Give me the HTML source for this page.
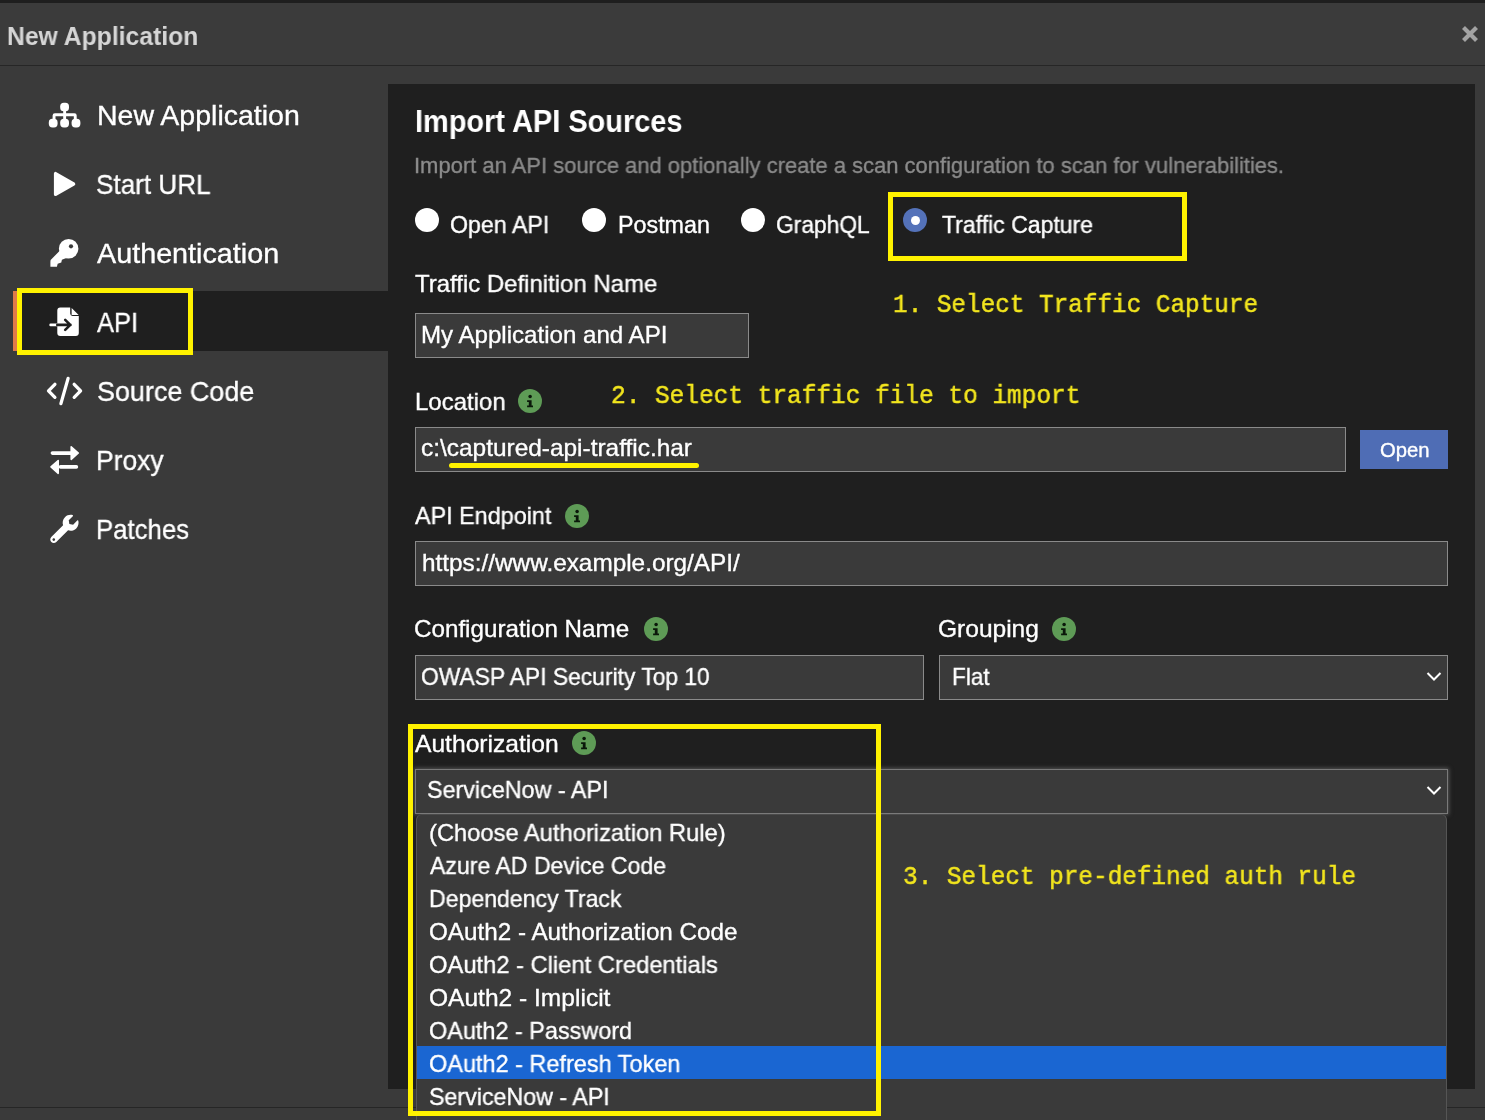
<!DOCTYPE html>
<html><head><meta charset="utf-8">
<style>
*{margin:0;padding:0;box-sizing:border-box}
html,body{width:1485px;height:1120px;overflow:hidden;background:#3a3a3a;font-family:"Liberation Sans",sans-serif;color:#fff}
.a{position:absolute;white-space:nowrap}
.t{position:absolute;white-space:nowrap;line-height:1;transform-origin:0 0;will-change:transform}
#topstrip{left:0;top:0;width:1485px;height:3px;background:#1e1e1e}
#hdr{left:0;top:3px;width:1485px;height:62px;background:#3b3b3b}
#hsep{left:0;top:65px;width:1485px;height:1px;background:#262626}
#panel{left:388px;top:84px;width:1087px;height:1005px;background:#1f1f1f}
#bsep{left:0;top:1106.5px;width:1485px;height:1.2px;background:#262626}
.side{font-size:28.5px;color:#fff}
.lbl{font-size:24px;color:#fff}
.inp{position:absolute;background:#3a3a3a;border:1px solid #8a8a8a}
.mono{font-family:"Liberation Mono",monospace;font-size:24.3px;color:#f2e51e}
.ybox{position:absolute;border:5px solid #fff200}
.radio{position:absolute;width:24px;height:24px;border-radius:50%;background:#fff}
.info{position:absolute;width:24px;height:24px}
.item{font-size:23.5px;color:#fff}
</style></head><body>
<div class="a" id="topstrip"></div>
<div class="a" id="hdr"></div>
<div class="a" id="hsep"></div>
<div class="a" id="bsep"></div>
<!-- close X -->
<svg class="a" style="left:1460px;top:23px" width="20" height="22" viewBox="0 0 20 22"><path d="M3.5 4.5 L16.5 17.5 M16.5 4.5 L3.5 17.5" stroke="#a3a3a3" stroke-width="4.2" stroke-linecap="butt"/></svg>

<!-- sidebar -->
<div class="a" style="left:13px;top:291px;width:375px;height:60px;background:#1f1f1f"></div>
<div class="a" style="left:13px;top:291px;width:4px;height:60px;background:#e07a48"></div>


<!-- icons -->
<svg class="a" style="left:40px;top:95px" width="50" height="40" viewBox="40 95 50 40">
 <g fill="#fff">
  <rect x="60.2" y="102.7" width="8.8" height="8.6" rx="3.6"/>
  <rect x="63.2" y="110" width="2.9" height="6"/>
  <path d="M52.6 119 V115.6 Q52.6 113.3 54.9 113.3 H74.4 Q76.7 113.3 76.7 115.6 V119 H73.8 V116.2 H55.5 V119 Z"/>
  <rect x="63.2" y="115" width="2.9" height="4"/>
  <rect x="48.8" y="118.8" width="8.8" height="8.6" rx="3.6"/>
  <rect x="60.2" y="118.8" width="8.8" height="8.6" rx="3.6"/>
  <rect x="71.6" y="118.8" width="8.8" height="8.6" rx="3.6"/>
 </g>
</svg>
<svg class="a" style="left:40px;top:165px" width="50" height="40" viewBox="40 165 50 40">
 <path d="M55.6 173.6 V194.4 L73.6 184 Z" fill="#fff" stroke="#fff" stroke-width="3.4" stroke-linejoin="round"/>
</svg>
<svg class="a" style="left:40px;top:230px" width="50" height="45" viewBox="40 230 50 45">
 <g fill="#fff"><circle cx="68.65" cy="248.75" r="9.75"/>
 <path d="M61 249.5 L50.65 260 Q50.4 261 50.4 262 V266.8 H56.9 L57.7 263.8 L61.3 262.4 L61.9 259.7 L65.7 258.2 L72 257.7 L66 252 Z"/></g>
 <circle cx="71" cy="246.3" r="2.1" fill="#3a3a3a"/>
</svg>
<svg class="a" style="left:40px;top:300px" width="50" height="45" viewBox="40 300 50 45">
 <path fill="#fff" d="M60 307.6 H70.2 V313.6 Q70.2 316 72.6 316 H78.8 V333 Q78.8 336 75.8 336 H60.3 Q57.3 336 57.3 333 V310.6 Q57.3 307.6 60.3 307.6 Z"/>
 <path fill="#fff" d="M71.6 308 L78.6 315 H71.6 Z"/>
 <path d="M50.6 324.9 H57.3" stroke="#fff" stroke-width="2.6" stroke-linecap="round"/>
 <path d="M57.3 324.9 H70.5 M65.2 319.9 L70.3 324.9 L65.2 329.9" stroke="#1f1f1f" stroke-width="2.6" fill="none" stroke-linecap="round" stroke-linejoin="round"/>
</svg>
<svg class="a" style="left:40px;top:370px" width="50" height="45" viewBox="40 370 50 45">
 <path d="M54.9 384.3 L48.5 390.8 L54.9 397.3 M74.2 384.3 L80.6 390.8 L74.2 397.3 M68.1 378.4 L60.9 403.6" stroke="#fff" stroke-width="3.3" fill="none" stroke-linecap="round" stroke-linejoin="round"/>
</svg>
<svg class="a" style="left:40px;top:440px" width="50" height="45" viewBox="40 440 50 45">
 <path d="M52.4 453.1 H71.5 M60.5 466.9 H76.4" stroke="#fff" stroke-width="3.6" stroke-linecap="round"/>
 <path d="M71.2 446.8 L78.3 453 L71.2 459.3 Z M58.2 460.6 L51 466.9 L58.2 473.3 Z" fill="#fff" stroke="#fff" stroke-width="1.6" stroke-linejoin="round"/>
</svg>
<svg class="a" style="left:40px;top:507px" width="50" height="45" viewBox="40 507 50 45">
 <g transform="translate(50.25 514.8) scale(0.0553)"><path fill="#fff" d="M507.73 109.1c-2.24-9.030-13.54-12.09-20.12-5.51l-74.36 74.36-67.88-11.31-11.31-67.88 74.36-74.36c6.62-6.62 3.43-17.9-5.66-20.16-47.38-11.74-99.55.91-136.58 37.93-39.64 39.64-50.55 97.1-34.05 147.2L18.74 402.76c-24.99 24.99-24.99 65.51 0 90.5 24.99 24.99 65.51 24.99 90.5 0l213.21-213.21c50.12 16.71 107.47 5.68 147.37-34.22 37.07-37.07 49.7-89.32 37.91-136.73zM64 472c-13.25 0-24-10.75-24-24 0-13.26 10.75-24 24-24s24 10.74 24 24c0 13.25-10.75 24-24 24z"/></g>
</svg>

<!-- yellow box sidebar -->
<div class="ybox" style="left:17px;top:288px;width:176px;height:67px"></div>

<!-- main panel -->
<div class="a" id="panel"></div>

<div class="radio" style="left:415px;top:208px"></div>
<div class="radio" style="left:582px;top:208px"></div>
<div class="radio" style="left:741px;top:208px"></div>
<div class="radio" style="left:903px;top:208px;background:#5472b9"></div>
<div class="a" style="left:910.5px;top:215.5px;width:9px;height:9px;border-radius:50%;background:#fff"></div>
<div class="ybox" style="left:888px;top:192px;width:299px;height:69px"></div>

<div class="inp" style="left:415px;top:313px;width:334px;height:45px"></div>

<div class="inp" style="left:415px;top:427px;width:931px;height:45px"></div>
<div class="a" style="left:449px;top:463px;width:250px;height:5px;border-radius:3px;background:#fff200"></div>
<div class="a" style="left:1360px;top:430px;width:88px;height:39px;background:#4f6db5"></div>

<div class="inp" style="left:415px;top:541px;width:1033px;height:45px"></div>

<div class="inp" style="left:415px;top:655px;width:509px;height:45px"></div>
<div class="inp" style="left:939px;top:655px;width:509px;height:45px"></div>
<svg class="a" style="left:1424px;top:669px" width="20" height="16" viewBox="0 0 20 16"><path d="M3.5 4 L10 10.5 L16.5 4" stroke="#fff" stroke-width="2" fill="none"/></svg>

<div class="inp" style="left:415px;top:769px;width:1033px;height:45px;border-color:#7a7a7a;box-shadow:0 0 4px 1px #555"></div>
<svg class="a" style="left:1424px;top:783px" width="20" height="16" viewBox="0 0 20 16"><path d="M3.5 4 L10 10.5 L16.5 4" stroke="#fff" stroke-width="2" fill="none"/></svg>

<!-- dropdown list -->
<div class="a" style="left:416px;top:814px;width:1031px;height:320px;background:#3a3a3a;border-left:1px solid #555;border-right:1px solid #555;border-top:1px solid #4a4a4a;border-radius:6px 6px 0 0"></div>
<div class="a" style="left:417px;top:1046px;width:1029px;height:33px;background:#1a66d2"></div>

<div class="t" style="left:7.13px;top:24.41px;font-size:25.50px;color:#d6d6d6;font-weight:bold;transform:scaleX(0.9690)">New Application</div>
<div class="t" style="left:96.60px;top:100.87px;font-size:28.50px;color:#fff;-webkit-text-stroke-width:0.35px">New Application</div>
<div class="t" style="left:96.48px;top:169.87px;font-size:28.50px;color:#fff;transform:scaleX(0.9159);-webkit-text-stroke-width:0.35px">Start URL</div>
<div class="t" style="left:97.00px;top:238.87px;font-size:28.50px;color:#fff;transform:scaleX(1.0085);-webkit-text-stroke-width:0.35px">Authentication</div>
<div class="t" style="left:97.00px;top:307.87px;font-size:28.50px;color:#fff;transform:scaleX(0.8951);-webkit-text-stroke-width:0.35px">API</div>
<div class="t" style="left:96.55px;top:376.87px;font-size:28.50px;color:#fff;transform:scaleX(0.9453);-webkit-text-stroke-width:0.35px">Source Code</div>
<div class="t" style="left:96.44px;top:445.87px;font-size:28.50px;color:#fff;transform:scaleX(0.9288);-webkit-text-stroke-width:0.35px">Proxy</div>
<div class="t" style="left:96.49px;top:514.87px;font-size:28.50px;color:#fff;transform:scaleX(0.9034);-webkit-text-stroke-width:0.35px">Patches</div>
<div class="t" style="left:414.53px;top:105.86px;font-size:31.00px;color:#fff;font-weight:bold;transform:scaleX(0.9338)">Import API Sources</div>
<div class="t" style="left:414.00px;top:155.18px;font-size:22.00px;color:#8b8b8b;transform:scaleX(0.9979);-webkit-text-stroke-width:0.35px">Import an API source and optionally create a scan configuration to scan for vulnerabilities.</div>
<div class="t" style="left:450.30px;top:214.28px;font-size:23.30px;color:#fff;transform:scaleX(0.9955);-webkit-text-stroke-width:0.35px">Open API</div>
<div class="t" style="left:618.10px;top:214.28px;font-size:23.30px;color:#fff;-webkit-text-stroke-width:0.35px">Postman</div>
<div class="t" style="left:776.42px;top:214.28px;font-size:23.30px;color:#fff;transform:scaleX(0.9782);-webkit-text-stroke-width:0.35px">GraphQL</div>
<div class="t" style="left:941.50px;top:214.28px;font-size:23.30px;color:#fff;transform:scaleX(0.9886);-webkit-text-stroke-width:0.35px">Traffic Capture</div>
<div class="t" style="left:415.20px;top:272.38px;font-size:24.00px;color:#fff;transform:scaleX(0.9979);-webkit-text-stroke-width:0.35px">Traffic Definition Name</div>
<div class="t" style="left:421.00px;top:322.68px;font-size:24.00px;color:#fff;transform:scaleX(1.0038);-webkit-text-stroke-width:0.35px">My Application and API</div>
<div class="t" style="left:415.20px;top:389.58px;font-size:24.00px;color:#fff;transform:scaleX(0.9978);-webkit-text-stroke-width:0.35px">Location</div>
<div class="t" style="left:420.98px;top:435.98px;font-size:24.00px;color:#fff;transform:scaleX(1.0175);-webkit-text-stroke-width:0.35px">c:\captured-api-traffic.har</div>
<div class="t" style="left:1379.50px;top:439.87px;font-size:20.00px;color:#fff;transform:scaleX(1.0125);-webkit-text-stroke-width:0.35px">Open</div>
<div class="t" style="left:414.80px;top:503.68px;font-size:24.00px;color:#fff;transform:scaleX(0.9734);-webkit-text-stroke-width:0.35px">API Endpoint</div>
<div class="t" style="left:421.89px;top:550.58px;font-size:24.00px;color:#fff;transform:scaleX(1.0138);-webkit-text-stroke-width:0.35px">https://www.example.org/API/</div>
<div class="t" style="left:414.19px;top:617.38px;font-size:24.00px;color:#fff;transform:scaleX(1.0080);-webkit-text-stroke-width:0.35px">Configuration Name</div>
<div class="t" style="left:420.95px;top:664.68px;font-size:24.00px;color:#fff;transform:scaleX(0.9506);-webkit-text-stroke-width:0.35px">OWASP API Security Top 10</div>
<div class="t" style="left:938.38px;top:617.38px;font-size:24.00px;color:#fff;transform:scaleX(1.0220);-webkit-text-stroke-width:0.35px">Grouping</div>
<div class="t" style="left:951.86px;top:664.68px;font-size:24.00px;color:#fff;transform:scaleX(0.9405);-webkit-text-stroke-width:0.35px">Flat</div>
<div class="t" style="left:415.00px;top:731.78px;font-size:24.00px;color:#fff;transform:scaleX(1.0257);-webkit-text-stroke-width:0.35px">Authorization</div>
<div class="t" style="left:427.43px;top:778.18px;font-size:24.00px;color:#fff;transform:scaleX(0.9720);-webkit-text-stroke-width:0.35px">ServiceNow - API</div>
<div class="t" style="left:429.00px;top:820.65px;font-size:23.80px;color:#fff;transform:scaleX(0.9966);-webkit-text-stroke-width:0.35px">(Choose Authorization Rule)</div>
<div class="t" style="left:430.00px;top:853.65px;font-size:23.80px;color:#fff;transform:scaleX(0.9695);-webkit-text-stroke-width:0.35px">Azure AD Device Code</div>
<div class="t" style="left:429.03px;top:886.65px;font-size:23.80px;color:#fff;transform:scaleX(0.9700);-webkit-text-stroke-width:0.35px">Dependency Track</div>
<div class="t" style="left:428.98px;top:919.65px;font-size:23.80px;color:#fff;transform:scaleX(1.0184);-webkit-text-stroke-width:0.35px">OAuth2 - Authorization Code</div>
<div class="t" style="left:429.00px;top:952.65px;font-size:23.80px;color:#fff;transform:scaleX(0.9973);-webkit-text-stroke-width:0.35px">OAuth2 - Client Credentials</div>
<div class="t" style="left:428.97px;top:985.65px;font-size:23.80px;color:#fff;transform:scaleX(1.0315);-webkit-text-stroke-width:0.35px">OAuth2 - Implicit</div>
<div class="t" style="left:429.02px;top:1018.65px;font-size:23.80px;color:#fff;transform:scaleX(0.9844);-webkit-text-stroke-width:0.35px">OAuth2 - Password</div>
<div class="t" style="left:429.01px;top:1051.65px;font-size:23.80px;color:#fff;transform:scaleX(0.9864);-webkit-text-stroke-width:0.35px">OAuth2 - Refresh Token</div>
<div class="t" style="left:429.02px;top:1084.65px;font-size:23.80px;color:#fff;transform:scaleX(0.9764);-webkit-text-stroke-width:0.35px">ServiceNow - API</div>
<div class="t" style="left:892.58px;top:292.49px;font-size:26.50px;color:#f2e51e;font-family:'Liberation Mono',monospace;transform:scaleX(0.9182);-webkit-text-stroke-width:0.50px">1. Select Traffic Capture</div>
<div class="t" style="left:611.18px;top:383.29px;font-size:26.50px;color:#f2e51e;font-family:'Liberation Mono',monospace;transform:scaleX(0.9224);-webkit-text-stroke-width:0.50px">2. Select traffic file to import</div>
<div class="t" style="left:902.78px;top:864.49px;font-size:26.50px;color:#f2e51e;font-family:'Liberation Mono',monospace;transform:scaleX(0.9190);-webkit-text-stroke-width:0.50px">3. Select pre-defined auth rule</div>
<div class="ybox" style="left:408px;top:724px;width:473px;height:392px"></div>

<!-- info icons -->
<svg class="info" style="left:518px;top:389px" viewBox="0 0 24 24"><circle cx="12" cy="12" r="12" fill="#5e9b56"/><circle cx="12.1" cy="7.5" r="1.75" fill="#0a180a"/><path d="M9.1 11.2 H13.6 V16.5 H15 V18.3 H9.1 V16.5 H10.8 V12.9 H9.1 Z" fill="#0a180a"/></svg>
<svg class="info" style="left:565px;top:503.5px" viewBox="0 0 24 24"><circle cx="12" cy="12" r="12" fill="#5e9b56"/><circle cx="12.1" cy="7.5" r="1.75" fill="#0a180a"/><path d="M9.1 11.2 H13.6 V16.5 H15 V18.3 H9.1 V16.5 H10.8 V12.9 H9.1 Z" fill="#0a180a"/></svg>
<svg class="info" style="left:644px;top:617.3px" viewBox="0 0 24 24"><circle cx="12" cy="12" r="12" fill="#5e9b56"/><circle cx="12.1" cy="7.5" r="1.75" fill="#0a180a"/><path d="M9.1 11.2 H13.6 V16.5 H15 V18.3 H9.1 V16.5 H10.8 V12.9 H9.1 Z" fill="#0a180a"/></svg>
<svg class="info" style="left:1052px;top:617.4px" viewBox="0 0 24 24"><circle cx="12" cy="12" r="12" fill="#5e9b56"/><circle cx="12.1" cy="7.5" r="1.75" fill="#0a180a"/><path d="M9.1 11.2 H13.6 V16.5 H15 V18.3 H9.1 V16.5 H10.8 V12.9 H9.1 Z" fill="#0a180a"/></svg>
<svg class="info" style="left:572px;top:731px" viewBox="0 0 24 24"><circle cx="12" cy="12" r="12" fill="#5e9b56"/><circle cx="12.1" cy="7.5" r="1.75" fill="#0a180a"/><path d="M9.1 11.2 H13.6 V16.5 H15 V18.3 H9.1 V16.5 H10.8 V12.9 H9.1 Z" fill="#0a180a"/></svg>

</body></html>
